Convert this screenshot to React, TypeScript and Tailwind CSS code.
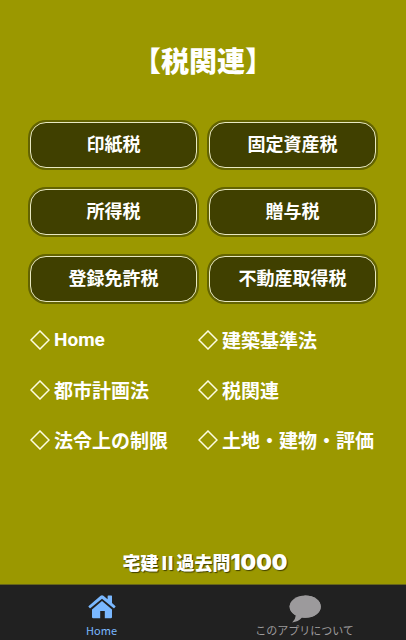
import React from 'react';
import clsx from 'clsx';

const TAXES = ['印紙税', '固定資産税', '所得税', '贈与税', '登録免許税', '不動産取得税'];

const CATEGORIES = [
    { label: 'Home', href: '#home', latin: true },
    { label: '建築基準法', href: '#building' },
    { label: '都市計画法', href: '#city' },
    { label: '税関連', href: '#tax' },
    { label: '法令上の制限', href: '#limits' },
    { label: '土地・建物・評価', href: '#land' },
];

function HomeIcon() {
    return (
        <svg viewBox="0 0 28 24" className="w-7 h-6" aria-hidden="true">
            <path
                fill="currentColor"
                d="M14 6 24 14.400V22q0 1.200-1.200 1.200h-6V16h-4.600v7.200H5.200Q4 23.200 4 22v-7.600z"
            />
            <path
                fill="currentColor"
                d="M12.600.8q1.400-1 2.800 0l4.200 3.500V1.200q0-.6.6-.6h3.200q.6 0 .6.6v6.900l3.300 2.800q.5.5 0 1l-.9 1q-.5.5-1 .1L14 3.800 2.600 13q-.5.4-1-.1l-.9-1q-.5-.5 0-1z"
            />
        </svg>
    );
}

function BubbleIcon() {
    return (
        <svg viewBox="0 0 32 28" className="w-8 h-7" aria-hidden="true">
            <path
                fill="currentColor"
                d="M16.200.4C25 .4 31.800 5 31.800 11.600S25 22.800 16.200 22.800q-1.700 0-3.200-.2Q9.200 27 3.200 27.400 6.600 24.200 6.800 20.200.6 17.200.6 11.600.6 5 16.200.4z"
            />
            <ellipse cx="16.200" cy="11.600" rx="15.600" ry="11.200" fill="currentColor" />
        </svg>
    );
}

const TABS = [
    { label: 'Home', icon: HomeIcon, active: true },
    { label: 'このアプリについて', icon: BubbleIcon, active: false },
];

export default function App() {
    return (
        <div className="min-h-screen flex flex-col bg-[#9b9800] text-white font-['Noto_Sans_CJK_JP',sans-serif]">
            <main className="grow flex flex-col px-7 pt-10">
                <h1 className="text-[28px] leading-10 font-black text-center">【税関連】</h1>

                {/* Quiz topics */}
                <div className="mt-10 grid grid-cols-2 gap-x-2 gap-y-[17px]">
                    {TAXES.map((tax) => (
                        <button
                            key={tax}
                            type="button"
                            className="h-[50px] rounded-[18px] bg-[#636300] p-[2px] cursor-pointer"
                        >
                            <span className="flex h-full items-center justify-center rounded-2xl border border-[#e8e8c0] bg-[#404000] pb-1 text-lg leading-6 font-bold whitespace-nowrap">
                                {tax}
                            </span>
                        </button>
                    ))}
                </div>

                {/* Categories */}
                <nav className="mt-5 grid grid-cols-[48%_52%] gap-y-[18px]">
                    {CATEGORIES.map((item) => (
                        <a
                            key={item.label}
                            href={item.href}
                            className={clsx(
                                'flex h-8 items-center gap-1 pl-[2px] text-[19px] leading-8 font-bold whitespace-nowrap',
                                item.latin && 'font-[Roboto,sans-serif]',
                            )}
                        >
                            <svg viewBox="0 0 20 20" className="w-5 h-5 shrink-0" aria-hidden="true">
                                <path d="M10 1 19 10 10 19 1 10z" fill="none" stroke="#fdfde0" strokeWidth="1.500" />
                            </svg>
                            {item.label}
                        </a>
                    ))}
                </nav>

                <p className="mt-auto pb-1 flex items-baseline justify-center pl-1 text-lg leading-9 font-black whitespace-nowrap [text-shadow:1px_1px_1px_#404000]">
                    宅建Ⅱ過去問<span className="text-[22px] leading-9 font-['Inter',sans-serif]">1000</span>
                </p>
            </main>

            <footer className="h-14 grid grid-cols-2 border-t border-[#66651a] bg-[#212121]">
                {TABS.map(({ label, icon: Icon, active }) => (
                    <button
                        key={label}
                        type="button"
                        className={clsx(
                            'flex flex-col items-center justify-end pb-[2px] cursor-pointer',
                            active ? 'text-[#7ab8ff]' : 'text-[#9c9a9c]',
                        )}
                    >
                        <span className="flex h-[27px] items-start">
                            <Icon />
                        </span>
                        <span className="text-[11px] leading-4">{label}</span>
                    </button>
                ))}
            </footer>
        </div>
    );
}
